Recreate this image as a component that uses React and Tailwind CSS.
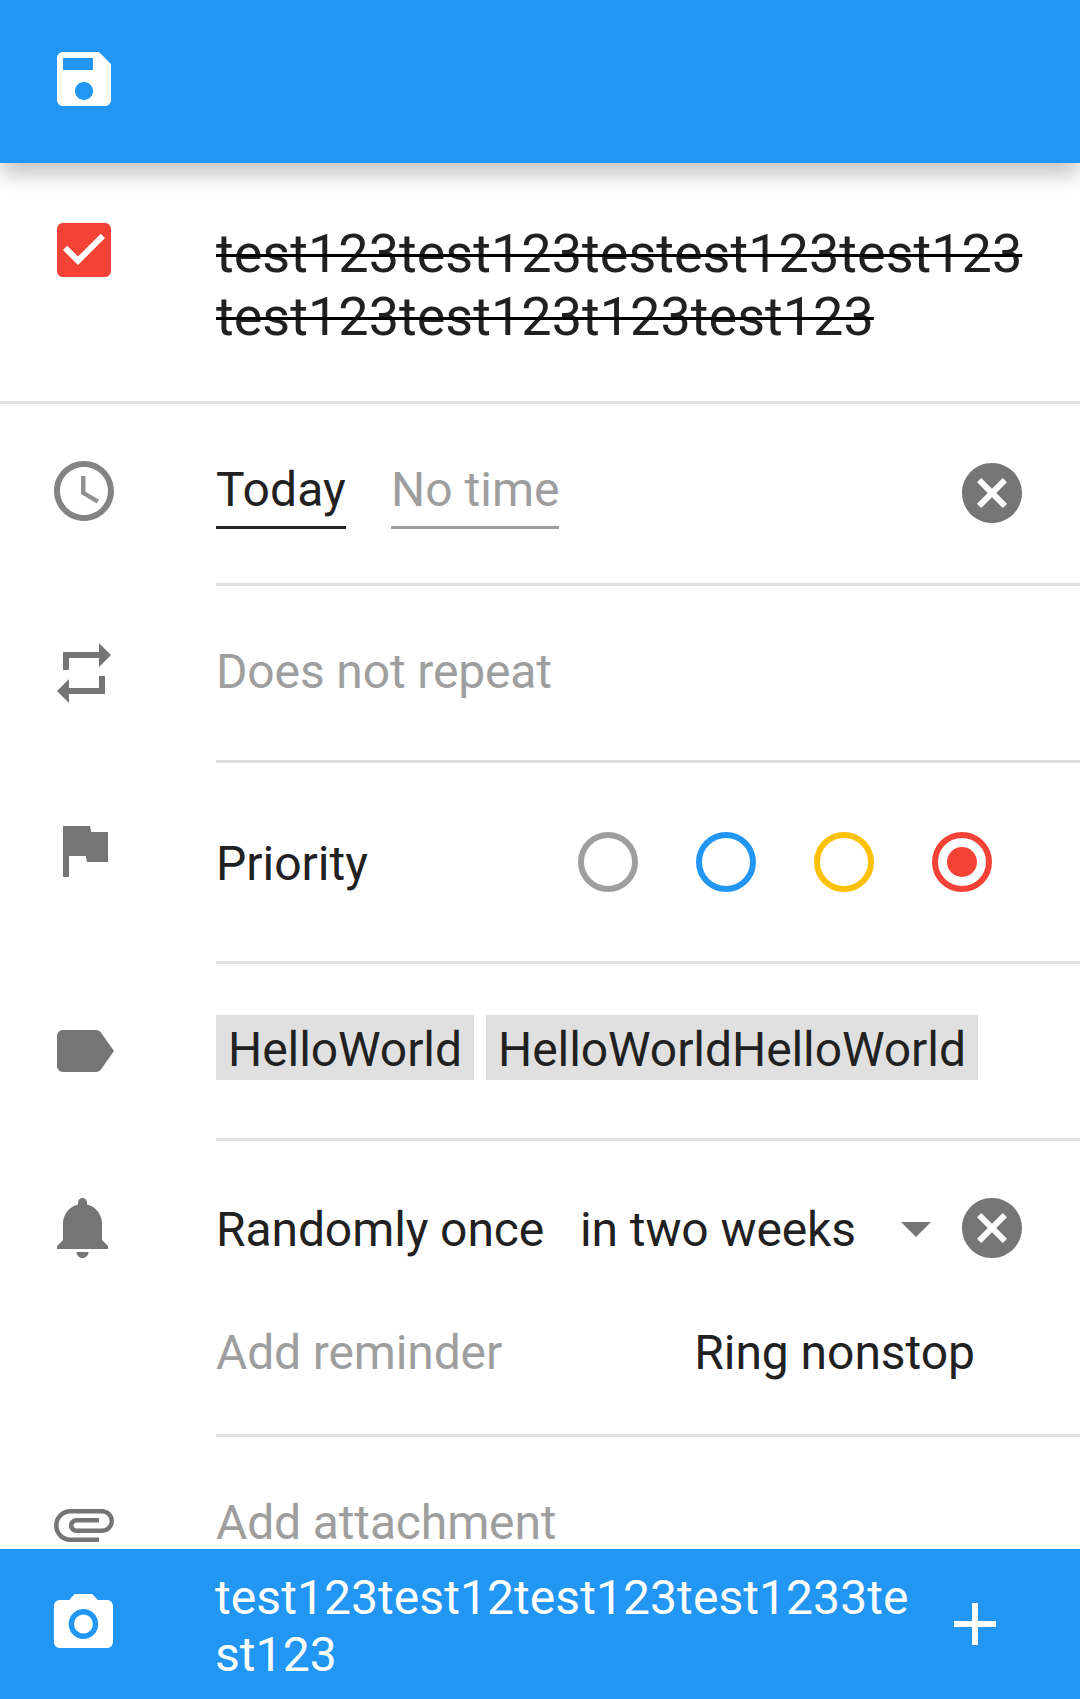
const ICONS = {
  save: "M17 3H5c-1.11 0-2 .9-2 2v14c0 1.1.89 2 2 2h14c1.1 0 2-.9 2-2V7l-4-4zm-5 16c-1.66 0-3-1.34-3-3s1.34-3 3-3 3 1.34 3 3-1.34 3-3 3zm3-10H5V5h10v4z",
  checkBox: "M19 3H5c-1.11 0-2 .9-2 2v14c0 1.1.89 2 2 2h14c1.11 0 2-.9 2-2V5c0-1.1-.89-2-2-2zm-9 14l-5-5 1.41-1.41L10 14.17l7.59-7.59L19 8l-9 9z",
  repeat: "M7 7h10v3l4-4-4-4v3H5v6h2V7zm10 10H7v-3l-4 4 4 4v-3h12v-6h-2v4z",
  flag: "M14.4 6L14 4H5v17h2v-7h5.6l.4 2h7V6z",
  label: "M17.63 5.84C17.27 5.33 16.67 5 16 5L5 5.01C3.9 5.01 3 5.9 3 7v10c0 1.1.9 1.99 2 1.99L16 19c.67 0 1.27-.33 1.63-.84L22 12l-4.37-6.16z",
  bell: "M11.5 22c1.1 0 2-.9 2-2h-4c0 1.1.9 2 2 2zm6.5-6v-5.5c0-3.07-2.13-5.64-5-6.32V3.5c0-.83-.67-1.5-1.5-1.5S10 2.67 10 3.5v.68c-2.87.68-5 3.25-5 6.32V16l-2 2v1h17v-1l-2-2z",
  attachment: "M7.5 18C4.46 18 2 15.54 2 12.5S4.46 7 7.5 7H18c2.21 0 4 1.79 4 4s-1.79 4-4 4H9.5C8.12 15 7 13.88 7 12.5S8.12 10 9.5 10H17v1.5H9.5c-.55 0-1 .45-1 1s.45 1 1 1H18c1.38 0 2.5-1.12 2.5-2.5S19.38 8.5 18 8.5H7.5c-2.21 0-4 1.79-4 4s1.79 4 4 4H17V18H7.5z",
  camera: "M9 2L7.17 4H4c-1.1 0-2 .9-2 2v12c0 1.1.9 2 2 2h16c1.1 0 2-.9 2-2V6c0-1.1-.9-2-2-2h-3.17L15 2H9zm3 15c-2.76 0-5-2.24-5-5s2.24-5 5-5 5 2.24 5 5-2.24 5-5 5zM12 8.8a3.2 3.2 0 1 0 0 6.4 3.2 3.2 0 0 0 0-6.4z",
  plus: "M19 13h-6v6h-2v-6H5v-2h6V5h2v6h6v2z",
  cancel: "M12 2C6.47 2 2 6.47 2 12s4.47 10 10 10 10-4.47 10-10S17.53 2 12 2zm5 13.59L15.59 17 12 13.41 8.41 17 7 15.59 10.59 12 7 8.41 8.41 7 12 10.59 15.59 7 17 8.41 13.41 12 17 15.59z",
  dropDown: "M7 10l5 5 5-5z",
};

function Icon({ name, className = "" }) {
  return (
    <svg viewBox="0 0 24 24" className={"block size-[72px] shrink-0 fill-current " + className}>
      <path fillRule="evenodd" d={ICONS[name]} />
    </svg>
  );
}

function ClockIcon() {
  return (
    <svg viewBox="0 0 24 24" className="block size-[72px] shrink-0 fill-current">
      <path
        fillOpacity=".9"
        d="M11.99 2C6.47 2 2 6.48 2 12s4.47 10 9.99 10C17.52 22 22 17.52 22 12S17.52 2 11.99 2zM12 20c-4.42 0-8-3.58-8-8s3.58-8 8-8 8 3.58 8 8-3.58 8-8 8z"
      />
      <path fillOpacity=".8" d="M12.5 7H11v6l5.25 3.15.75-1.23-4.5-2.67z" />
    </svg>
  );
}

function Row({ icon, iconClass, className, children }) {
  return (
    <section className={"flex shrink-0 pl-12 " + className}>
      <div className={"w-[168px] shrink-0 text-[#757575] " + iconClass}>{icon}</div>
      <div className="min-w-0 flex-1">{children}</div>
    </section>
  );
}

function Divider() {
  return <div className="ml-[216px] h-[3px] shrink-0 bg-[#e0e0e0]" />;
}

const PRIORITIES = [
  { id: "none", color: "border-[#9e9e9e]" },
  { id: "low", color: "border-[#2196f3]" },
  { id: "medium", color: "border-[#ffc107]" },
  { id: "high", color: "border-[#f44336]", dot: "bg-[#f44336]" },
];

export default function App() {
  return (
    <div className="flex h-[1699px] w-[1080px] flex-col overflow-hidden bg-white font-[Roboto,sans-serif] text-[48px] leading-[56px] text-[#212121]">
      <header className="z-10 h-[163px] shrink-0 bg-[#2196f3] pt-[43px] pl-12 text-white shadow-[0_15px_18px_-2px_rgba(0,0,0,0.17),0_6px_26px_0_rgba(0,0,0,0.08)]">
        <Icon name="save" />
      </header>

      <main className="flex min-h-0 flex-1 flex-col">
        <Row
          icon={<Icon name="checkBox" className="text-[#f44336]" />}
          iconClass="pt-[51px]"
          className="h-[238px]"
        >
          <h1 className="pt-[59px] text-[54px] leading-[63px] tracking-[0.02px] line-through decoration-black decoration-[3px]">
            test123test123testest123test123
            <br />
            test123test123t123test123
          </h1>
        </Row>
        <div className="h-[3px] shrink-0 bg-[#e0e0e0]" />

        <Row icon={<ClockIcon />} iconClass="pt-[51px]" className="h-[179px]">
          <div className="flex items-start">
            <div className="mt-[58px] h-[67px] w-[130px] border-b-[3px] border-[#212121] tracking-[0.15px]">
              Today
            </div>
            <div className="mt-[58px] ml-[45px] h-[67px] w-[168px] border-b-[3px] border-[#9e9e9e] whitespace-nowrap text-[#9e9e9e]">
              No time
            </div>
            <Icon name="cancel" className="mt-[53px] mr-[52px] ml-auto text-[#757575]" />
          </div>
        </Row>
        <Divider />

        <Row icon={<Icon name="repeat" />} iconClass="pt-[51px]" className="h-[174px]">
          <div className="pt-[58px] tracking-[-0.14px] text-[#9e9e9e]">Does not repeat</div>
        </Row>
        <Divider />

        <Row icon={<Icon name="flag" />} iconClass="pt-[51px]" className="h-[198px]">
          <div className="flex items-start justify-between">
            <div className="pt-[73px]">Priority</div>
            <div className="mt-[69px] mr-[88px] flex gap-[58px]">
              {PRIORITIES.map((p) => (
                <div
                  key={p.id}
                  className={"flex size-[60px] items-center justify-center rounded-full border-[6px] " + p.color}
                >
                  {p.dot && <div className={"size-[30px] rounded-full " + p.dot} />}
                </div>
              ))}
            </div>
          </div>
        </Row>
        <Divider />

        <Row icon={<Icon name="label" />} iconClass="pt-[51px]" className="h-[174px]">
          <div className="flex gap-3 pt-[51px] tracking-[-0.07px]">
            <div className="h-[65px] w-[258px] bg-[#e0e0e0] px-3 pt-[7px]">HelloWorld</div>
            <div className="h-[65px] w-[492px] bg-[#e0e0e0] px-3 pt-[7px]">HelloWorldHelloWorld</div>
          </div>
        </Row>
        <Divider />

        <Row icon={<Icon name="bell" />} iconClass="pt-[51px]" className="h-[293px]">
          <div className="flex items-start pt-[51px] tracking-[-0.1px]">
            <div className="w-[364px] pt-[10px]">Randomly once</div>
            <div className="flex-1 pt-[10px]">in two weeks</div>
            <Icon name="dropDown" className="text-[#757575]" />
            <Icon name="cancel" className="mr-[52px] ml-1 text-[#757575]" />
          </div>
          <div className="mt-[61px] mr-[105px] flex justify-between">
            <div className="tracking-[-0.14px] text-[#9e9e9e]">Add reminder</div>
            <div className="tracking-[-0.05px]">Ring nonstop</div>
          </div>
        </Row>
        <Divider />

        <Row icon={<Icon name="attachment" />} iconClass="pt-[51px]" className="h-[112px]">
          <div className="pt-[60px] leading-[52px] tracking-[-0.14px] text-[#9e9e9e]">Add attachment</div>
        </Row>
      </main>

      <footer className="flex h-[150px] shrink-0 items-start bg-[#2196f3] pl-12 text-white">
        <Icon name="camera" className="mt-[39px] origin-left scale-x-[0.985]" />
        <p className="mt-[20px] ml-[95px] w-[700px] leading-[57px] tracking-[0.07px]">
          test123test12test123test1233te
          <br />
          st123
        </p>
        <Icon name="plus" className="mt-[39px] ml-6" />
      </footer>
    </div>
  );
}
